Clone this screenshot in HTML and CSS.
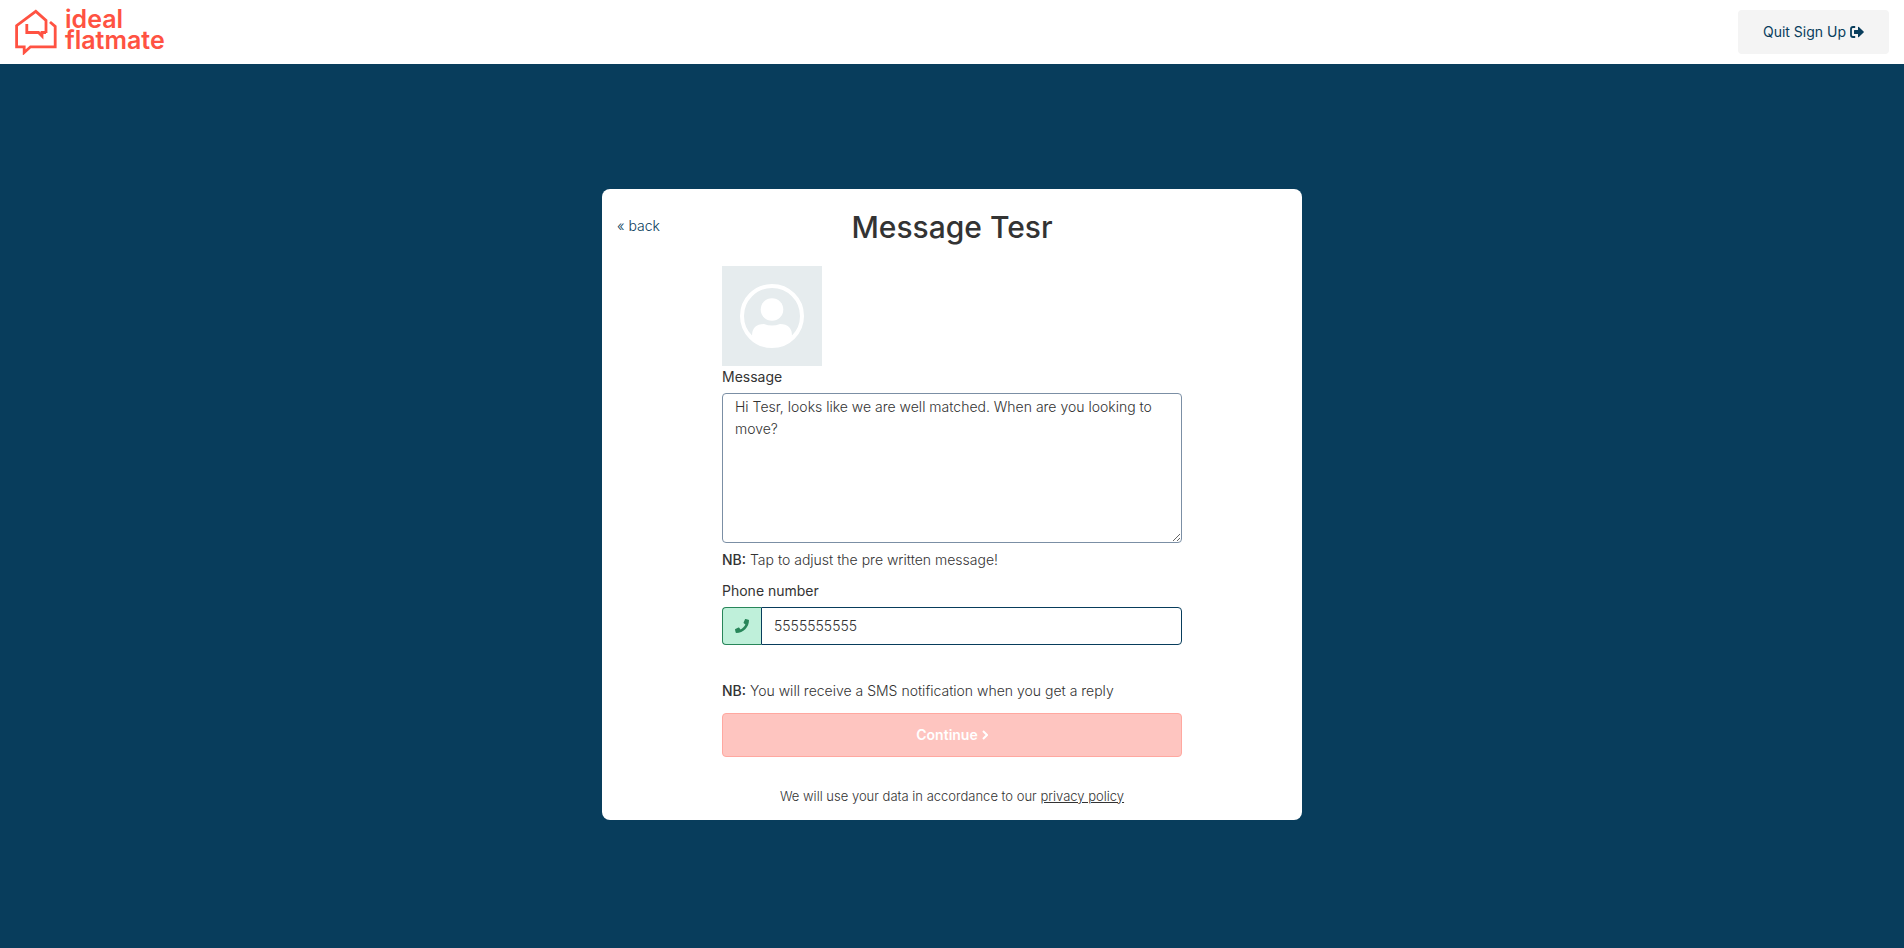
FILE: index.html
```html
<!DOCTYPE html>
<html lang="en">
<head>
<meta charset="utf-8">
<meta name="viewport" content="width=device-width, initial-scale=1">
<title>Message Tesr</title>
<link rel="stylesheet" href="styles.css">
</head>
<body>
<header class="topbar">
  <a class="logo" href="#">
    <svg class="logo-mark" viewBox="0 0 42 46" fill="none" stroke="currentColor" stroke-width="2.8" aria-hidden="true">
      <path d="M31 24V11.5L20.8 2.4 1.6 16.7V37.8H9.2V43.5L15.5 37.8H40.2V17.5L35 13"/>
      <path d="M11.8 15V23.5H23.5L27 27V23.5H31"/>
    </svg>
    <span class="logo-text">ideal<br>flatmate</span>
  </a>
  <button class="quit" type="button">Quit Sign Up
    <svg class="quit-icon" viewBox="0 0 14 12" aria-hidden="true">
      <path d="M5.2 1H3Q1 1 1 3V9Q1 11 3 11H5.2" fill="none" stroke="currentColor" stroke-width="1.8"/>
      <path d="M4.5 4H8V1.3Q8 .2 8.9 .9L13.6 5.4Q14.2 6 13.6 6.6L8.9 11.1Q8 11.8 8 10.7V8H4.5Q4 8 4 7.5V4.5Q4 4 4.5 4Z" fill="currentColor"/>
    </svg>
  </button>
</header>
<main class="page">
  <section class="card">
    <div class="card-head">
      <a class="back" href="#">« back</a>
      <h1 class="title">Message Tesr</h1>
    </div>
    <form class="form">
      <svg class="avatar" viewBox="0 0 100 100" role="img" aria-label="Tesr">
        <rect width="100" height="100" fill="#e6ecee"/>
        <circle cx="50" cy="50" r="30" fill="none" stroke="#fff" stroke-width="4"/>
        <circle cx="50" cy="43.5" r="11.3" fill="#fff"/>
        <path d="M30 70Q30 58 42 58Q50 61 58 58Q70 58 70 70Q61 80 50 80Q39 80 30 70Z" fill="#fff"/>
      </svg>
      <label class="label" for="message">Message</label>
      <textarea class="message" id="message">Hi Tesr, looks like we are well matched. When are you looking to move?</textarea>
      <p class="note"><strong>NB:</strong> Tap to adjust the pre written message!</p>
      <label class="label phone-label" for="phone">Phone number</label>
      <div class="phone">
        <span class="phone-addon">
          <svg class="phone-icon" viewBox="0 0 512 512" aria-hidden="true"><path fill="currentColor" d="M493.4 24.6l-104-24c-11.300-2.600-22.900 3.300-27.500 13.900l-48 112c-4.200 9.800-1.400 21.300 6.900 28l60.600 49.600c-36 76.700-98.900 140.500-177.200 177.200l-49.600-60.600c-6.800-8.300-18.200-11.100-28-6.900l-112 48C3.900 366.500-2 378.100.6 389.400l24 104C27.100 504.200 36.700 512 48 512c256.100 0 464-207.500 464-464 0-11.200-7.700-20.900-18.600-23.400z"/></svg>
        </span>
        <input class="phone-input" id="phone" type="tel" value="5555555555">
      </div>
      <p class="note sms-note"><strong>NB:</strong> You will receive a SMS notification when you get a reply</p>
      <button class="continue" type="submit" disabled>Continue
        <svg class="chevron" viewBox="0 0 6 10" fill="none" stroke="currentColor" stroke-width="2" aria-hidden="true"><path d="M1 1L5 5L1 9"/></svg>
      </button>
    </form>
    <p class="privacy">We will use your data in accordance to our <a class="privacy-link" href="#">privacy policy</a></p>
  </section>
</main>
</body>
</html>
```
FILE: styles.css
```css
*, *::before, *::after { box-sizing: border-box; }
body {
  margin: 0;
  min-height: 100vh;
  background: #083d5c;
  color: #333;
  font: 300 14px/22px Inter, "Open Sans", sans-serif;
}
p, h1 { margin: 0; }
button, input, textarea { font: inherit; color: inherit; }
.topbar {
  display: flex;
  align-items: center;
  justify-content: space-between;
  height: 64px;
  padding: 0 15px;
  background: #fff;
}
.logo {
  display: flex;
  align-items: center;
  gap: 8px;
  color: #ff5242;
  text-decoration: none;
}
.logo-mark { width: 42px; height: 46px; }
.logo-text { font-size: 25px; font-weight: 600; line-height: 21px; padding-bottom: 4px; }
.quit {
  display: flex;
  align-items: center;
  justify-content: center;
  gap: 4px;
  height: 44px;
  padding: 0 25px;
  border: 0;
  border-radius: 4px;
  background: #f4f4f4;
  color: #083d5c;
  font-weight: 400;
}
.quit-icon { width: 14px; height: 12px; }
.page { padding: 125px 16px 48px; }
.card {
  max-width: 700px;
  margin: 0 auto;
  padding: 16px 15px 14px;
  border-radius: 8px;
  background: #fff;
}
.card-head {
  display: grid;
  grid-template-columns: 1fr auto 1fr;
  align-items: center;
  margin-bottom: 16px;
}
.back { color: #083d5c; text-decoration: none; padding-bottom: 4px; }
.title { font-size: 30px; font-weight: 500; line-height: 45px; }
.form { display: flex; flex-direction: column; max-width: 460px; margin: 0 auto; }
.avatar { width: 100px; height: 100px; }
.label { margin-bottom: 5px; font-weight: 400; }
.message {
  height: 150px;
  padding: 2px 12px;
  border: 1px solid #7b8fa5;
  border-radius: 4px;
  background: #fff;
  resize: vertical;
}
.note { margin-top: 6px; }
.note strong { font-weight: 500; }
.phone-label { margin-top: 9px; }
.phone { display: flex; height: 38px; }
.phone-addon {
  display: flex;
  align-items: center;
  justify-content: center;
  width: 39px;
  border: 1px solid #28865a;
  border-right: 0;
  border-radius: 4px 0 0 4px;
  background: #bff0da;
  color: #28865a;
}
.phone-icon { width: 14px; height: 14px; }
.phone-input {
  flex: 1;
  min-width: 0;
  padding: 0 12px;
  border: 1px solid #083d5c;
  border-radius: 0 4px 4px 0;
  background: #fff;
}
.sms-note { margin-top: 35px; }
.continue {
  display: flex;
  align-items: center;
  justify-content: center;
  gap: 4px;
  height: 44px;
  margin-top: 11px;
  border: 1px solid #ffa8a0;
  border-radius: 4px;
  background: #fec5c0;
  color: #fff;
  font-weight: 600;
}
.chevron { width: 6px; height: 10px; }
.privacy { margin-top: 29px; font-size: 13px; line-height: 20px; text-align: center; }
.privacy-link { color: inherit; }
```
